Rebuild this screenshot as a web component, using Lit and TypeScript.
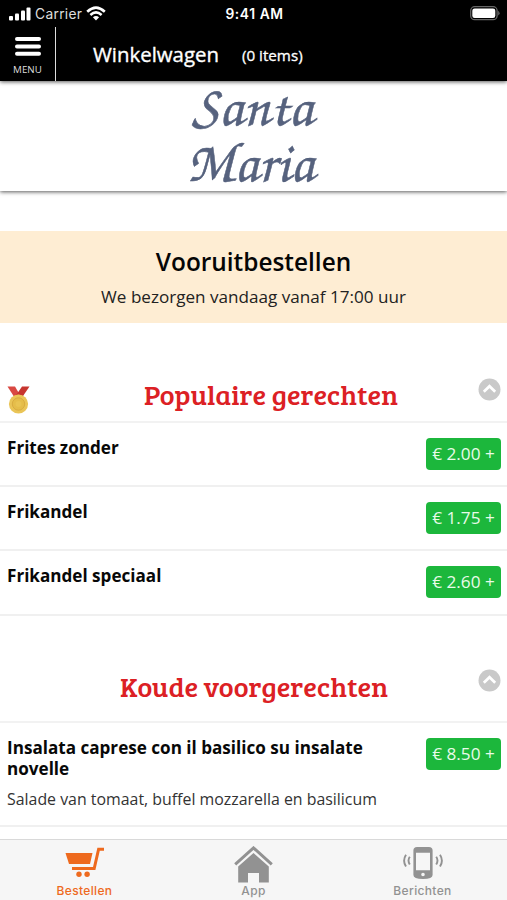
import { LitElement, html, svg, css, nothing } from "lit";
import { customElement, property } from "lit/decorators.js";

interface Dish {
  name: string;
  price: string;
  description?: string;
}

@customElement("status-bar")
class StatusBar extends LitElement {
  static styles = css`
    :host {
      display: grid;
      grid-template-columns: 1fr auto 1fr;
      align-items: center;
      height: 27px;
      padding: 0 7px 0 9px;
      box-sizing: border-box;
      background: #000;
      color: #fff;
      font-family: Inter, "Liberation Sans", sans-serif;
    }
    .left { display: flex; align-items: center; gap: 4px; }
    .carrier { font-size: 13.8px; letter-spacing: 0.3px; color: #ddd; }
    .time { font-size: 13.8px; font-weight: 600; letter-spacing: 0.6px; }
    .battery { justify-self: end; }
    svg { display: block; }
  `;
  render() {
    return html`
      <div class="left">
        <svg width="22" height="14" fill="#fff">
          <rect x="0" y="9" width="4" height="4.5" rx="1" />
          <rect x="6" y="6.5" width="4" height="7" rx="1" />
          <rect x="12" y="3.5" width="4" height="10" rx="1" />
          <rect x="17.5" y="0.5" width="4" height="13" rx="1" />
        </svg>
        <span class="carrier">Carrier</span>
        <svg width="20" height="15" viewBox="0 0 20 15" fill="none" stroke="#fff">
          <path d="M1.2 5.8Q10 -2.4 18.8 5.8" stroke-width="2.6" />
          <path d="M4.4 9Q10 3.8 15.6 9" stroke-width="2.5" />
          <path d="M6.9 11.3Q10 8.6 13.1 11.3L10 14.4Z" fill="#fff" stroke="none" />
        </svg>
      </div>
      <span class="time">9:41 AM</span>
      <svg class="battery" width="30" height="15">
        <rect x="0.7" y="0.7" width="26.4" height="13" rx="4" fill="none" stroke="#666" stroke-width="1.3" />
        <rect x="2.3" y="2.4" width="23" height="9.6" rx="2.3" fill="#fff" />
        <path d="M28.2 4.8Q31 7.2 28.2 9.6Z" fill="#666" />
      </svg>
    `;
  }
}

@customElement("shop-header")
class ShopHeader extends LitElement {
  static styles = css`
    :host { display: block; }
    .nav {
      position: relative;
      display: flex;
      height: 54px;
      background: #000;
      color: #fff;
      box-shadow: 0 1px 4px rgba(0, 0, 0, 0.65);
    }
    .menu {
      width: 56px;
      height: 54px;
      box-sizing: border-box;
      border-right: 1.4px solid #ddd;
      display: flex;
      flex-direction: column;
      align-items: center;
      padding-top: 10px;
    }
    .menu svg { display: block; }
    .menu span { font-size: 9.8px; line-height: 12px; margin-top: 8px; color: #ddd; }
    .cart {
      font-size: 20.4px;
      line-height: 54px;
      margin-left: 37px;
      -webkit-text-stroke: 0.35px #fff;
    }
    .count {
      font-size: 15.2px;
      line-height: 57px;
      margin-left: 23px;
      -webkit-text-stroke: 0.3px #fff;
    }
    .logo {
      display: flex;
      justify-content: center;
      height: 110px;
      background: #fff;
      box-shadow: 0 1px 4px rgba(0, 0, 0, 0.65);
    }
    .brand {
      overflow: visible;
      font-family: "Z003", "URW Chancery L", "TeX Gyre Chorus", "Monotype Corsiva", "Apple Chancery", "Felipa", "Quintessential", "Liberation Serif", serif;
      font-size: 57px;
      fill: #56627e;
      stroke: #56627e;
      stroke-width: 0.5px;
    }
  `;
  render() {
    return html`
      <div class="nav">
        <div class="menu">
          <svg width="26" height="19" stroke="#fff" stroke-width="4" stroke-linecap="round">
            <path d="M2 2H24M2 9.4H24M2 16.8H24" />
          </svg>
          <span>MENU</span>
        </div>
        <span class="cart">Winkelwagen</span>
        <span class="count">(0 items)</span>
      </div>
      <div class="logo">
        <svg class="brand" width="140" height="110">
          <text x="8" y="44" textLength="121" lengthAdjust="spacingAndGlyphs">Santa</text>
          <text x="3" y="100" textLength="127" lengthAdjust="spacingAndGlyphs">Maria</text>
        </svg>
      </div>
    `;
  }
}

@customElement("menu-section")
class MenuSection extends LitElement {
  @property() heading = "";
  @property({ type: Number }) headingWidth = 254;
  @property({ type: Boolean }) medal = false;
  @property({ attribute: false }) dishes: Dish[] = [];

  static styles = css`
    :host { display: block; }
    .head {
      display: grid;
      grid-template-columns: 32px 1fr 32px;
      height: 56px;
      border-bottom: 2px solid #f2f2f2;
    }
    .head.plain { height: 64px; }
    .medal { margin: 21px 0 0 7px; }
    .title { justify-self: center; margin-left: 35px; }
    .plain .title { margin-left: 0; }
    .title text {
      font-family: "Bree Serif", "DejaVu Serif Condensed", "DejaVu Serif", serif;
      font-size: 27px;
      fill: #dc2024;
    }
    .toggle { margin: 13px 0 0 3px; }
    .plain .toggle { margin-top: 12px; }
    svg { display: block; }
    .dish {
      display: flex;
      justify-content: space-between;
      align-items: flex-start;
      min-height: 64.2px;
      box-sizing: border-box;
      padding: 14px 6px 0 7px;
      border-bottom: 2px solid #f0f0f0;
    }
    .dish.tall { height: 104px; }
    .text { width: 380px; }
    .name { font-size: 17.1px; line-height: 21px; font-weight: 700; color: #080808; }
    .desc { font-size: 15.9px; line-height: 21px; color: #333; margin-top: 10px; }
    .price {
      width: 75px;
      height: 32px;
      margin-top: 1px;
      border-radius: 4px;
      background: #1cb73c;
      color: #e9fbe9;
      font-size: 17.2px;
      line-height: 32px;
      text-align: center;
      white-space: nowrap;
      flex: none;
    }
  `;
  render() {
    return html`
      <div class="head ${this.medal ? "" : "plain"}">
        <div>
          ${this.medal
            ? html`<svg class="medal" width="23" height="28">
                <path d="M0.5 0.5H8L13.5 10L8.5 13Z" fill="#d94842" />
                <path d="M22.5 0.5H15L8.5 10L14 13Z" fill="#c7352f" />
                <path d="M7.6 9.8Q11.5 7.6 15.4 9.8L14.2 11.4H8.8Z" fill="#dca83a" />
                <circle cx="11.5" cy="18" r="9.6" fill="#eac557" />
                <circle cx="11.5" cy="18" r="6.2" fill="#e5bd4a" stroke="#d9ac40" />
                <circle cx="11.5" cy="18" r="3" fill="#e9c453" />
              </svg>`
            : nothing}
        </div>
        <svg class="title" width=${this.headingWidth + 4} height="52">
          <text x="2" y="40" textLength=${this.headingWidth} lengthAdjust="spacingAndGlyphs">${this.heading}</text>
        </svg>
        <svg class="toggle" width="23" height="23">
          <circle cx="11.5" cy="11.5" r="11" fill="#c9c9c9" />
          <path d="M5.8 13.8L11.5 8.2L17.2 13.8" fill="none" stroke="#fff" stroke-width="2.7" />
        </svg>
      </div>
      ${this.dishes.map(
        (d) => html`<div class="dish ${d.description ? "tall" : ""}">
          <div class="text">
            <div class="name">${d.name}</div>
            ${d.description ? html`<div class="desc">${d.description}</div>` : nothing}
          </div>
          <div class="price">€ ${d.price} +</div>
        </div>`
      )}
    `;
  }
}

const cartIcon = svg`
  <path d="M0.5 6H27.5L25 17H4Z" />
  <path d="M39 2.2H33.6L29.2 21.5H7" fill="none" stroke="currentColor" stroke-width="3" />
  <circle cx="14" cy="27.2" r="2.7" /><circle cx="22.1" cy="27.2" r="2.7" />`;
const homeIcon = svg`
  <path d="M1.2 18.4L19.5 1.9L37.8 18.4" fill="none" stroke="currentColor" stroke-width="3" />
  <path d="M4.2 20.5L19.5 7L34.8 20.5V36.5H25V27H14V36.5H4.2Z" />`;
const phoneIcon = svg`
  <path fill-rule="evenodd" d="M14 1H26Q29.6 1 29.6 4.5V29Q29.6 33 20 33Q10.4 33 10.4 29V4.5Q10.4 1 14 1ZM13 6.8V24.2H27V6.8ZM20 26.7A1.8 1.8 0 1 0 20 30.3A1.8 1.8 0 1 0 20 26.7Z" />
  <path d="M6.8 10.8Q4.2 14.5 6.8 18.6M3 8.8Q-0.8 14.7 3 20.6M33.2 10.8Q35.8 14.5 33.2 18.6M37 8.8Q40.8 14.7 37 20.6" fill="none" stroke="currentColor" stroke-width="1.9" />`;

@customElement("tab-bar")
class TabBar extends LitElement {
  static styles = css`
    :host {
      display: grid;
      grid-template-columns: repeat(3, 1fr);
      height: 61px;
      box-sizing: border-box;
      border-top: 1.4px solid #d9d9d9;
      background: #f6f6f6;
      font-family: Inter, "Liberation Sans", sans-serif;
    }
    .tab {
      display: flex;
      flex-direction: column;
      align-items: center;
      color: #929292;
      font-size: 12px;
      font-weight: 500;
      line-height: 14px;
      letter-spacing: 0.35px;
    }
    .tab.active { color: #ee6a1e; }
    .icon { height: 37px; margin-top: 6px; fill: currentColor; }
    .tab span { margin-top: 1px; }
    .tab.active .icon { margin-top: 7px; }
    .tab.active span { margin-top: 0; }
  `;
  render() {
    return html`
      <div class="tab active">
        <svg class="icon" width="39" height="37">${cartIcon}</svg><span>Bestellen</span>
      </div>
      <div class="tab">
        <svg class="icon" width="39" height="37">${homeIcon}</svg><span>App</span>
      </div>
      <div class="tab">
        <svg class="icon" width="40" height="37">${phoneIcon}</svg><span>Berichten</span>
      </div>
    `;
  }
}

@customElement("app-root")
class AppRoot extends LitElement {
  static styles = css`
    :host {
      display: flex;
      flex-direction: column;
      height: 900px;
      overflow: hidden;
      background: #fff;
      font-family: "Open Sans", sans-serif;
    }
    .content { flex: 1; min-height: 0; overflow: hidden; padding-top: 40px; }
    .notice {
      height: 92px;
      box-sizing: border-box;
      background: #feedd3;
      text-align: center;
      padding-top: 14px;
      color: #050505;
    }
    .notice-title { font-size: 24.4px; line-height: 34px; font-weight: 600; }
    .notice-text { font-size: 17.1px; line-height: 24px; margin-top: 6px; color: #222; }
    .popular { margin-top: 42px; }
    .cold { margin-top: 41px; }
  `;
  render() {
    return html`
      <status-bar></status-bar>
      <shop-header></shop-header>
      <div class="content">
        <div class="notice">
          <div class="notice-title">Vooruitbestellen</div>
          <div class="notice-text">We bezorgen vandaag vanaf 17:00 uur</div>
        </div>
        <menu-section
          class="popular"
          heading="Populaire gerechten"
          .headingWidth=${254}
          medal
          .dishes=${[
            { name: "Frites zonder", price: "2.00" },
            { name: "Frikandel", price: "1.75" },
            { name: "Frikandel speciaal", price: "2.60" },
          ]}
        ></menu-section>
        <menu-section
          class="cold"
          heading="Koude voorgerechten"
          .headingWidth=${268}
          .dishes=${[
            {
              name: "Insalata caprese con il basilico su insalate novelle",
              price: "8.50",
              description: "Salade van tomaat, buffel mozzarella en basilicum",
            },
          ]}
        ></menu-section>
      </div>
      <tab-bar></tab-bar>
    `;
  }
}
